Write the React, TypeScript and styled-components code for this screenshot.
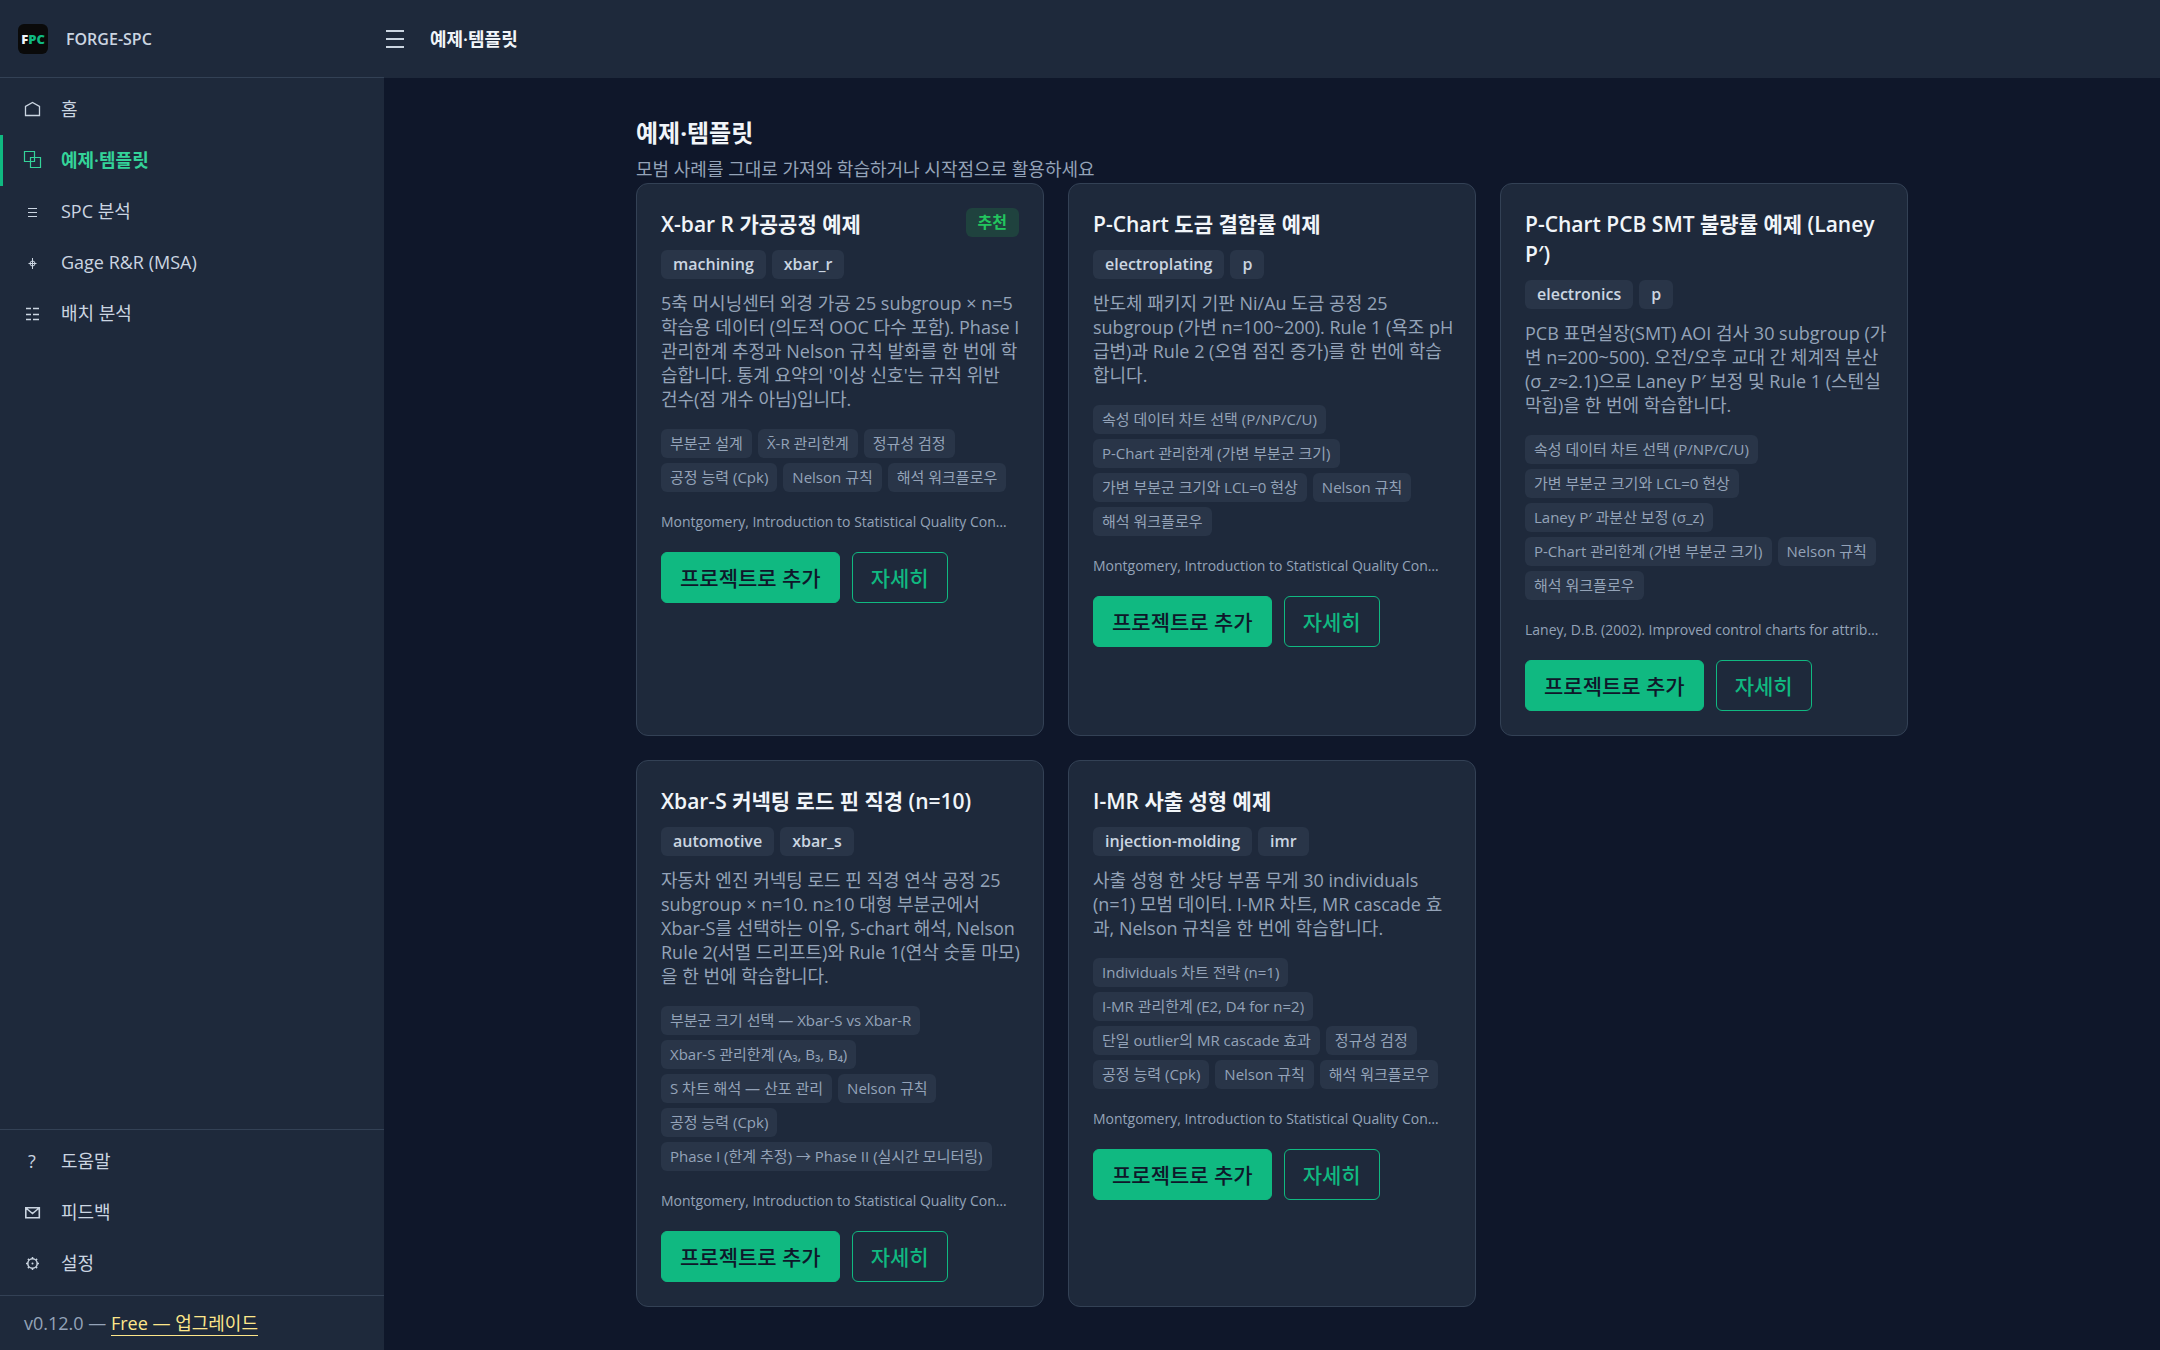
import React from "react";
import styled, { createGlobalStyle, css } from "styled-components";

const GlobalStyle = createGlobalStyle`
  *, *::before, *::after { box-sizing: border-box; }
  body {
    margin: 0;
    background: #0f172a;
    color: #f1f5f9;
    font-family: "Open Sans", "Noto Sans CJK KR", sans-serif;
    font-size: 18px;
    line-height: 24px;
  }
  h1, h2, p, ul { margin: 0; padding: 0; }
  ul { list-style: none; }
  button { font: inherit; cursor: pointer; }
`;

const Shell = styled.div`
  display: grid;
  grid-template-columns: 384px minmax(0, 1fr);
  min-height: 100vh;
`;

const Sidebar = styled.aside`
  display: flex;
  flex-direction: column;
  background: #1e293b;
  color: #cbd5e1;
`;

const Brand = styled.div`
  display: flex;
  align-items: center;
  gap: 18px;
  height: 78px;
  padding: 0 18px;
  border-bottom: 1px solid #334155;
  font-size: 16px;
  font-weight: 600;
`;

const Logo = styled.span`
  display: flex;
  align-items: center;
  justify-content: center;
  width: 30px;
  height: 30px;
  border-radius: 6px;
  background: #0a0a0a;
  color: #f1f5f9;
  font-size: 13px;
  font-weight: 800;

  b {
    color: #10b981;
    font-weight: 800;
  }
`;

const NavList = styled.ul<{ $bottom?: boolean }>`
  padding: 6px 0;
  ${(p) =>
    p.$bottom &&
    css`
      margin-top: auto;
      border-top: 1px solid #334155;
    `}
`;

const NavLink = styled.a<{ $active?: boolean }>`
  display: flex;
  align-items: center;
  gap: 17px;
  height: 51px;
  padding: 0 20px 1px 17px;
  border-left: 3px solid ${(p) => (p.$active ? "#10b981" : "transparent")};
  color: ${(p) => (p.$active ? "#34d399" : "#cbd5e1")};
  font-weight: ${(p) => (p.$active ? 600 : 400)};
  text-decoration: none;
`;

const IconBox = styled.span`
  display: flex;
  align-items: center;
  justify-content: center;
  width: 24px;
  height: 24px;
`;

const Version = styled.div`
  height: 55px;
  padding: 15px 24px;
  border-top: 1px solid #334155;
  color: #94a3b8;

  a {
    color: #fde68a;
    text-decoration: none;
    border-bottom: 1px solid currentColor;
  }
`;

const Page = styled.div`
  display: flex;
  flex-direction: column;
  min-width: 0;
`;

const TopBar = styled.header`
  display: flex;
  align-items: center;
  gap: 24px;
  height: 78px;
  background: #1e293b;
  font-weight: 600;
`;

const MenuButton = styled.button`
  display: flex;
  padding: 0;
  border: 0;
  background: none;
  color: #cbd5e1;
`;

const Main = styled.main`
  width: 100%;
  max-width: 1320px;
  margin: 0 auto;
  padding: 36px 24px;
`;

const Heading = styled.h1`
  margin-bottom: 4px;
  font-size: 24px;
  line-height: 38px;
  font-weight: 700;
`;

const Lead = styled.p`
  line-height: 27px;
  color: #94a3b8;
`;

const CardGrid = styled.div`
  display: grid;
  grid-template-columns: repeat(auto-fill, minmax(390px, 1fr));
  gap: 24px;
`;

const Card = styled.article`
  display: flex;
  flex-direction: column;
  min-width: 0;
  padding: 24px;
  border: 1px solid #334155;
  border-radius: 12px;
  background: #1e293b;
`;

const CardHead = styled.div`
  display: flex;
  align-items: flex-start;
  justify-content: space-between;
  gap: 6px;
  margin-bottom: 11px;
`;

const CardTitle = styled.h2`
  padding-top: 1px;
  font-size: 21px;
  line-height: 30px;
  font-weight: 600;
`;

const Badge = styled.span<{ $recommended?: boolean }>`
  flex: none;
  padding: 0 12px;
  border-radius: 6px;
  background: ${(p) => (p.$recommended ? "#1f423e" : "#293548")};
  color: ${(p) => (p.$recommended ? "#22c55e" : "#cbd5e1")};
  font-size: 16px;
  line-height: 29px;
  font-weight: 600;
`;

const BadgeRow = styled.div`
  display: flex;
  gap: 6px;
  margin-bottom: 12px;
`;

const Description = styled.p`
  margin: 0 -12px 18px 0;
  color: #94a3b8;
  white-space: pre-line;
`;

const TopicList = styled.ul`
  display: flex;
  flex-wrap: wrap;
  gap: 5px 6px;
  margin-bottom: 18px;
`;

const Topic = styled.li`
  padding: 0 9px;
  border-radius: 6px;
  background: #293548;
  color: #94a3b8;
  font-size: 15px;
  line-height: 29px;
`;

const Citation = styled.p`
  margin-bottom: 18px;
  color: #94a3b8;
  font-size: 14px;
  white-space: nowrap;
`;

const Actions = styled.div`
  display: flex;
  gap: 12px;
`;

const ActionButton = styled.button<{ $primary?: boolean }>`
  height: 51px;
  padding: 0 18px;
  border: 1px solid #10b981;
  border-radius: 6px;
  background: ${(p) => (p.$primary ? "#10b981" : "transparent")};
  color: ${(p) => (p.$primary ? "#0f172a" : "#10b981")};
  font-size: 21px;
  line-height: 30px;
  font-weight: 500;
`;

type IconName = "home" | "templates" | "spc" | "gage" | "batch" | "mail" | "settings";

const iconShapes: Record<IconName, React.ReactNode> = {
  home: <path d="M5.5 19.5v-9l7-4 7 4v9z" strokeWidth="1.3" />,
  templates: <path d="M4.5 4.5h10v10h-10zM10.5 10.5h10v10h-10z" strokeWidth="1.2" />,
  spc: <path d="M8 10.5h9M8 14.5h9M8 18.5h9" />,
  gage: (
    <>
      <circle cx="12.5" cy="14.5" r="2.5" />
      <path d="M12.5 9v11M8.5 14.5h8" />
    </>
  ),
  batch: <path d="M6 8.5h5M13 8.5h6M6 14.5h5M13 14.5h6M6 19.5h5M13 19.5h6" strokeWidth="1.6" />,
  mail: <path d="M5.8 8.8h13.5v10h-13.5zM6.5 9.5l6 5 6-5" strokeWidth="1.6" />,
  settings: (
    <>
      <circle cx="12.5" cy="13.5" r="4.7" strokeWidth="1.5" />
      <circle cx="12.5" cy="13.5" r="1" fill="currentColor" stroke="none" />
      <path
        d="M12.5 7v2M12.5 18v2M6 13.5h2M17 13.5h2M7.9 8.9l1.3 1.3M15.8 16.8l1.3 1.3M17.1 8.9l-1.3 1.3M9.2 16.8l-1.3 1.3"
        strokeWidth="1.5"
      />
    </>
  ),
};

function Icon({ name }: { name: IconName }) {
  return (
    <svg width="24" height="24" viewBox="0 1 24 24" fill="none" stroke="currentColor" aria-hidden="true">
      {iconShapes[name]}
    </svg>
  );
}

interface NavEntry {
  label: string;
  icon?: IconName;
  active?: boolean;
}

const primaryNav: NavEntry[] = [
  { label: "홈", icon: "home" },
  { label: "예제·템플릿", icon: "templates", active: true },
  { label: "SPC 분석", icon: "spc" },
  { label: "Gage R&R (MSA)", icon: "gage" },
  { label: "배치 분석", icon: "batch" },
];

const secondaryNav: NavEntry[] = [
  { label: "도움말" },
  { label: "피드백", icon: "mail" },
  { label: "설정", icon: "settings" },
];

function NavItem({ label, icon, active }: NavEntry) {
  return (
    <li>
      <NavLink href="#" $active={active} aria-current={active ? "page" : undefined}>
        <IconBox>{icon ? <Icon name={icon} /> : "?"}</IconBox>
        {label}
      </NavLink>
    </li>
  );
}

interface Example {
  title: string;
  tags: string[];
  description: string;
  topics: string[];
  citation: string;
  recommended?: boolean;
}

const montgomery = "Montgomery, Introduction to Statistical Quality Con…";

const examples: Example[] = [
  {
    title: "X-bar R 가공공정 예제",
    recommended: true,
    tags: ["machining", "xbar_r"],
    description:
      "5축 머시닝센터 외경 가공 25 subgroup × n=5\n학습용 데이터 (의도적 OOC 다수 포함). Phase I\n관리한계 추정과 Nelson 규칙 발화를 한 번에 학\n습합니다. 통계 요약의 '이상 신호'는 규칙 위반\n건수(점 개수 아님)입니다.",
    topics: ["부분군 설계", "X̄-R 관리한계", "정규성 검정", "공정 능력 (Cpk)", "Nelson 규칙", "해석 워크플로우"],
    citation: montgomery,
  },
  {
    title: "P-Chart 도금 결함률 예제",
    tags: ["electroplating", "p"],
    description:
      "반도체 패키지 기판 Ni/Au 도금 공정 25\nsubgroup (가변 n=100~200). Rule 1 (욕조 pH\n급변)과 Rule 2 (오염 점진 증가)를 한 번에 학습\n합니다.",
    topics: [
      "속성 데이터 차트 선택 (P/NP/C/U)",
      "P-Chart 관리한계 (가변 부분군 크기)",
      "가변 부분군 크기와 LCL=0 현상",
      "Nelson 규칙",
      "해석 워크플로우",
    ],
    citation: montgomery,
  },
  {
    title: "P-Chart PCB SMT 불량률 예제 (Laney P′)",
    tags: ["electronics", "p"],
    description:
      "PCB 표면실장(SMT) AOI 검사 30 subgroup (가\n변 n=200~500). 오전/오후 교대 간 체계적 분산\n(σ_z≈2.1)으로 Laney P′ 보정 및 Rule 1 (스텐실\n막힘)을 한 번에 학습합니다.",
    topics: [
      "속성 데이터 차트 선택 (P/NP/C/U)",
      "가변 부분군 크기와 LCL=0 현상",
      "Laney P′ 과분산 보정 (σ_z)",
      "P-Chart 관리한계 (가변 부분군 크기)",
      "Nelson 규칙",
      "해석 워크플로우",
    ],
    citation: "Laney, D.B. (2002). Improved control charts for attrib…",
  },
  {
    title: "Xbar-S 커넥팅 로드 핀 직경 (n=10)",
    tags: ["automotive", "xbar_s"],
    description:
      "자동차 엔진 커넥팅 로드 핀 직경 연삭 공정 25\nsubgroup × n=10. n≥10 대형 부분군에서\nXbar-S를 선택하는 이유, S-chart 해석, Nelson\nRule 2(서멀 드리프트)와 Rule 1(연삭 숫돌 마모)\n을 한 번에 학습합니다.",
    topics: [
      "부분군 크기 선택 — Xbar-S vs Xbar-R",
      "Xbar-S 관리한계 (A₃, B₃, B₄)",
      "S 차트 해석 — 산포 관리",
      "Nelson 규칙",
      "공정 능력 (Cpk)",
      "Phase I (한계 추정) → Phase II (실시간 모니터링)",
    ],
    citation: montgomery,
  },
  {
    title: "I-MR 사출 성형 예제",
    tags: ["injection-molding", "imr"],
    description:
      "사출 성형 한 샷당 부품 무게 30 individuals\n(n=1) 모범 데이터. I-MR 차트, MR cascade 효\n과, Nelson 규칙을 한 번에 학습합니다.",
    topics: [
      "Individuals 차트 전략 (n=1)",
      "I-MR 관리한계 (E2, D4 for n=2)",
      "단일 outlier의 MR cascade 효과",
      "정규성 검정",
      "공정 능력 (Cpk)",
      "Nelson 규칙",
      "해석 워크플로우",
    ],
    citation: montgomery,
  },
];

function ExampleCard({ example }: { example: Example }) {
  return (
    <Card>
      <CardHead>
        <CardTitle>{example.title}</CardTitle>
        {example.recommended && <Badge $recommended>추천</Badge>}
      </CardHead>
      <BadgeRow>
        {example.tags.map((tag) => (
          <Badge key={tag}>{tag}</Badge>
        ))}
      </BadgeRow>
      <Description>{example.description}</Description>
      <TopicList>
        {example.topics.map((topic) => (
          <Topic key={topic}>{topic}</Topic>
        ))}
      </TopicList>
      <Citation>{example.citation}</Citation>
      <Actions>
        <ActionButton type="button" $primary>
          프로젝트로 추가
        </ActionButton>
        <ActionButton type="button">자세히</ActionButton>
      </Actions>
    </Card>
  );
}

export default function App() {
  return (
    <>
      <GlobalStyle />
      <Shell>
        <Sidebar>
          <Brand>
            <Logo>
              F<b>PC</b>
            </Logo>
            FORGE-SPC
          </Brand>
          <nav>
            <NavList>
              {primaryNav.map((entry) => (
                <NavItem key={entry.label} {...entry} />
              ))}
            </NavList>
          </nav>
          <NavList $bottom>
            {secondaryNav.map((entry) => (
              <NavItem key={entry.label} {...entry} />
            ))}
          </NavList>
          <Version>
            v0.12.0 — <a href="#">Free — 업그레이드</a>
          </Version>
        </Sidebar>
        <Page>
          <TopBar>
            <MenuButton type="button" aria-label="메뉴">
              <svg width="22" height="22" viewBox="0 0 22 22" stroke="currentColor" strokeWidth="2" aria-hidden="true">
                <path d="M2 3h18M2 11h18M2 19h18" />
              </svg>
            </MenuButton>
            예제·템플릿
          </TopBar>
          <Main>
            <Heading>예제·템플릿</Heading>
            <Lead>모범 사례를 그대로 가져와 학습하거나 시작점으로 활용하세요</Lead>
            <CardGrid>
              {examples.map((example) => (
                <ExampleCard key={example.title} example={example} />
              ))}
            </CardGrid>
          </Main>
        </Page>
      </Shell>
    </>
  );
}
